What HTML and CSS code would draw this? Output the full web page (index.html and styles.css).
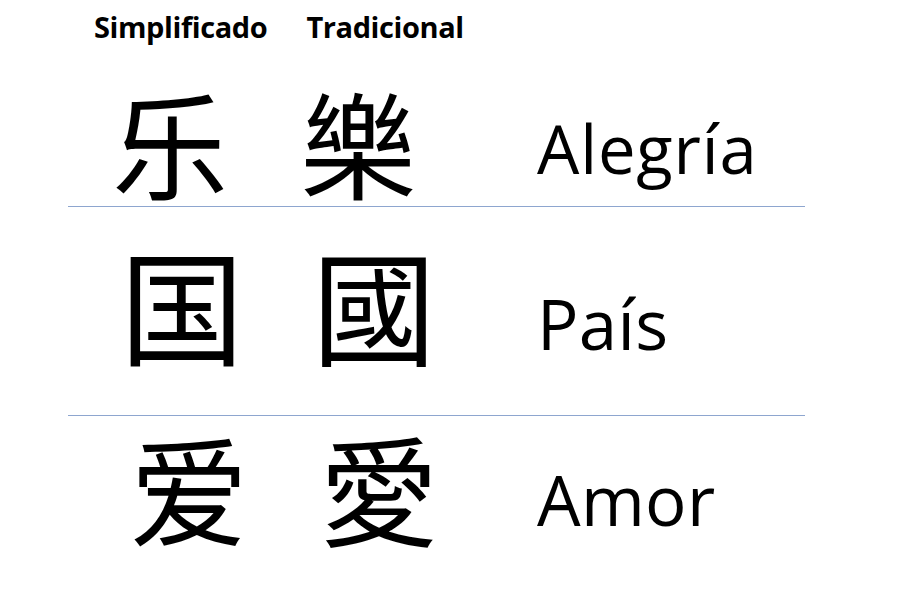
FILE: index.html
```html
<!DOCTYPE html>
<html lang="es">
<head>
<meta charset="utf-8">
<title>Simplificado / Tradicional</title>
<link rel="stylesheet" href="styles.css">
</head>
<body>
<div class="page">
  <div class="head">
    <span class="h1">Simplificado</span>
    <span class="h2">Tradicional</span>
  </div>
  <div class="row r1">
    <span class="zh">乐</span>
    <span class="zh">樂</span>
    <span class="es">Alegría</span>
  </div>
  <div class="row r2">
    <span class="zh">国</span>
    <span class="zh">國</span>
    <span class="es">País</span>
  </div>
  <div class="row r3">
    <span class="zh">爱</span>
    <span class="zh">愛</span>
    <span class="es">Amor</span>
  </div>
</div>
</body>
</html>
```
FILE: styles.css
```css
html, body {
  margin: 0;
  padding: 0;
  background: #ffffff;
}
.page {
  width: 900px;
  height: 600px;
  overflow: hidden;
  font-family: "Open Sans", "Liberation Sans", sans-serif;
  color: #000;
}
.head {
  height: 52px;
  display: flex;
  align-items: center;
  padding-left: 94px;
  gap: 39px;
  font-weight: 700;
  font-size: 29px;
  letter-spacing: -0.4px;
}
.row {
  margin-left: 68px;
  width: 737px;
  display: grid;
  align-items: center;
  box-sizing: border-box;
}
.r1 {
  height: 155px;
  padding-top: 30px;
  border-bottom: 1px solid #8ea6cf;
  grid-template-columns: 204px 172px 1fr;
}
.r2 {
  height: 209px;
  padding-top: 4px;
  border-bottom: 1px solid #8ea6cf;
  grid-template-columns: 228px 156px 1fr;
}
.r3 {
  height: 185px;
  padding-bottom: 26px;
  grid-template-columns: 242px 138px 1fr;
}
.zh {
  font-family: "Noto Sans CJK SC", "Noto Sans CJK TC", sans-serif;
  font-size: 116px;
  line-height: 1;
  text-align: center;
  margin-bottom: 18px;
}
.r1 .zh {
  margin-bottom: 22px;
}
.r2 .zh {
  font-size: 124px;
  margin-bottom: 22px;
}
.r3 .zh {
  font-size: 119px;
}
.es {
  font-size: 69px;
  line-height: 1;
  padding-top: 8px;
  letter-spacing: 0.3px;
}
.r1 .es {
  font-size: 67px;
  letter-spacing: 0.8px;
  padding-left: 93px;
  padding-top: 0;
  margin-bottom: 6px;
}
.r2 .es {
  padding-left: 85px;
  padding-top: 20px;
}
.r3 .es {
  padding-left: 89px;
}
```
